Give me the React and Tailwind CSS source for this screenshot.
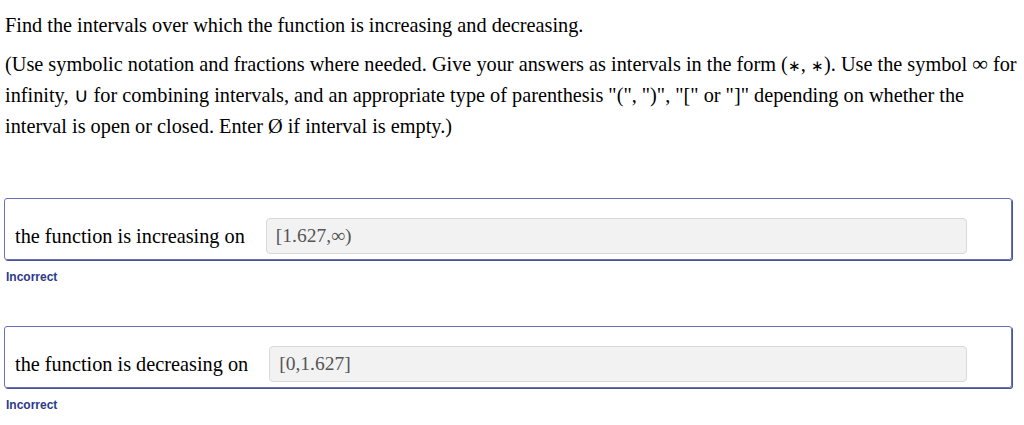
import React from 'react';

const serif = { fontFamily: '"Liberation Serif", "Times New Roman", serif' };

const AnswerRow = ({ label, value, gap }) => (
    <div>
        <div className="ml-[4px] mr-[12px] h-[62px] border-[1.5px] border-[#6a72b4] rounded-[3px] shadow-[1px_1px_0_#4a5290] flex items-end pb-[5px] pl-[10px]">
            <span className="h-[36px] flex items-center text-[20.3px] text-black whitespace-nowrap" style={serif}>{label}</span>
            <div className={`${gap} mr-[44px] flex-1 h-[36px] bg-[#f2f2f2] border border-[#d9d9d9] rounded-[4px] flex items-center pl-[9px] text-[19.5px] text-[#555]`} style={serif}>
                {value}
            </div>
        </div>
        <div className="pl-[6px] pt-[8px] text-[12px] font-bold text-[#2d3a8c]" style={{ fontFamily: '"Liberation Sans", Arial, sans-serif' }}>
            Incorrect
        </div>
    </div>
);

export default function App() {
    return (
        <div className="w-[1024px] h-[425px] bg-white overflow-hidden">
            <div className="px-[5px] pt-[10px] text-[20.3px] text-black leading-[31px] whitespace-nowrap" style={serif}>
                <p>Find the intervals over which the function is increasing and decreasing.</p>
                <p className="mt-[8px]">
                    (Use symbolic notation and fractions where needed. Give your answers as intervals in the form (<span className="text-[15px] leading-none">∗</span>, <span className="text-[15px] leading-none">∗</span>). Use the symbol <span className="text-[22px] leading-none">∞</span> for
                    <br />
                    infinity, ∪ for combining intervals, and an appropriate type of parenthesis "(", ")", "[" or "]" depending on whether the
                    <br />
                    interval is open or closed. Enter Ø if interval is empty.)
                </p>
            </div>

            <div className="mt-[56px]">
                <AnswerRow label="the function is increasing on" value="[1.627,∞)" gap="ml-[21px]" />
            </div>
            <div className="mt-[40px]">
                <AnswerRow label="the function is decreasing on" value="[0,1.627]" gap="ml-[21px]" />
            </div>
        </div>
    );
}
